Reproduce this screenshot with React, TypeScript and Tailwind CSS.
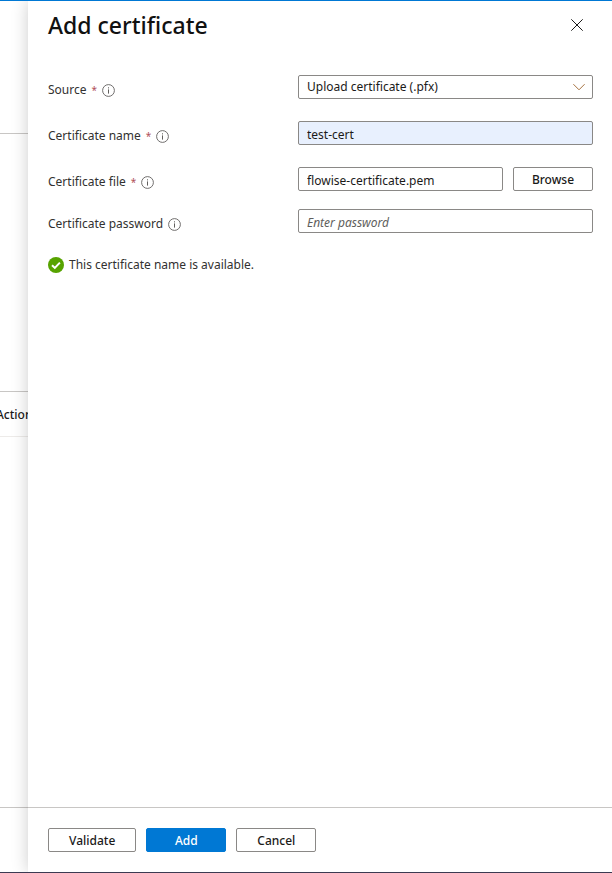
import { useState } from 'react';
import type { ReactNode } from 'react';

const BUTTON = 'h-6 shrink-0 rounded-xs border pt-0.5 text-xs leading-5 font-medium';
const FIELD = 'h-6 w-full min-w-0 rounded-xs border border-[#8a8886] px-2 text-xs leading-5 text-[#1b1a19] outline-none';

function InfoIcon() {
  return (
    <svg className="size-[13px] shrink-0" viewBox="0 0 13 13" fill="none" stroke="#605e5c" aria-hidden="true">
      <circle cx="6.5" cy="6.5" r="5.9" strokeWidth="0.9" />
      <path d="M6.5 5.4v4.2" />
      <path d="M6.5 3.3v1.1" />
    </svg>
  );
}

function CheckIcon() {
  return (
    <svg className="size-4 shrink-0" viewBox="0 0 16 16" fill="none" aria-hidden="true">
      <circle cx="8" cy="8" r="8" fill="#57a300" />
      <path d="M4 8.3l2.8 2.6 5.1-5.3" stroke="#fff" strokeWidth="2" />
    </svg>
  );
}

type RowProps = {
  id: string;
  label: string;
  required?: boolean;
  children: ReactNode;
};

function Row({ id, label, required, children }: RowProps) {
  return (
    <div className="flex">
      <label htmlFor={id} className="flex w-[250px] shrink-0 items-center gap-[5px] pt-1.5 text-xs leading-4 text-[#323130]">
        {label}
        {required && <span className="text-[10px] text-[#b0505a]">*</span>}
        <InfoIcon />
      </label>
      <div className="flex min-w-0 flex-1 gap-[10px]">{children}</div>
    </div>
  );
}

export default function App() {
  const [name, setName] = useState('test-cert');
  const [password, setPassword] = useState('');

  return (
    <div className="flex min-h-screen border-t border-t-[#0078d4] border-b border-b-[#3b3a52] bg-white font-['Noto_Sans','Segoe_UI',sans-serif] text-[#1b1a19]">
      {/* Page behind the panel */}
      <div className="flex w-7 shrink-0 flex-col overflow-hidden">
        <div className="h-[133px] border-b border-[#c8c6c4]" />
        <div className="h-[258px] border-b border-[#c8c6c4]" />
        <div className="flex h-[45px] items-center border-b border-[#edebe9] pt-0.5">
          <span className="-ml-1 text-xs leading-5 font-medium">Action</span>
        </div>
        <div className="flex-1" />
        <div className="h-[65px] border-t border-[#c8c6c4]" />
      </div>

      <section className="relative flex min-w-0 flex-1 flex-col bg-white shadow-[0_0_16px_rgba(0,0,0,0.2)] [clip-path:inset(0_0_0_-28px)]">
        <header className="flex items-center justify-between pt-2 pr-[27px] pl-5">
          <h1 className="text-[23px] leading-8 font-medium text-[#111]">Add certificate</h1>
          <button type="button" aria-label="Close" className="flex size-4 items-center justify-center">
            <svg className="size-3" viewBox="0 0 12 12" fill="none" stroke="#1b1a19" aria-hidden="true">
              <path d="M0.3 0.3l11.4 11.4M11.7 0.3L0.3 11.7" />
            </svg>
          </button>
        </header>

        <form id="certificate" className="flex-1 pt-[34px] pr-[19px] pl-5" onSubmit={(e) => e.preventDefault()}>
          <div className="flex flex-col gap-[22px]">
            <Row id="source" label="Source" required>
              <div className="relative w-full">
                <select id="source" className={`${FIELD} block appearance-none bg-white`}>
                  <option>Upload certificate (.pfx)</option>
                </select>
                <svg
                  className="pointer-events-none absolute top-2 right-2 h-2 w-3"
                  viewBox="0 0 12 8"
                  fill="none"
                  stroke="#a5713f"
                  aria-hidden="true"
                >
                  <path d="M0.4 1.2L6 6.8l5.6-5.6" />
                </svg>
              </div>
            </Row>
            <Row id="name" label="Certificate name" required>
              <input
                id="name"
                value={name}
                onChange={(e) => setName(e.target.value)}
                className={`${FIELD} bg-[#e8f0fe] pt-0.5`}
              />
            </Row>
            <Row id="file" label="Certificate file" required>
              <input id="file" readOnly value="flowise-certificate.pem" className={`${FIELD} pt-0.5`} />
              <button type="button" className={`${BUTTON} w-20 border-[#8a8886]`}>
                Browse
              </button>
            </Row>
          </div>
          <div className="mt-[18px]">
            <Row id="password" label="Certificate password">
              <input
                id="password"
                type="password"
                placeholder="Enter password"
                value={password}
                onChange={(e) => setPassword(e.target.value)}
                className={`${FIELD} pt-0.5 placeholder:text-[#605e5c] placeholder:italic`}
              />
            </Row>
          </div>
          <p className="mt-[22px] flex items-center gap-[5px] text-xs leading-5 text-[#323130]">
            <CheckIcon />
            This certificate name is available.
          </p>
        </form>

        <footer className="flex h-[65px] items-center gap-[10px] border-t border-[#c8c6c4] px-5">
          <button type="button" className={`${BUTTON} border-[#8a8886] px-5`}>
            Validate
          </button>
          <button type="submit" form="certificate" className={`${BUTTON} w-20 border-[#0078d4] bg-[#0078d4] text-white`}>
            Add
          </button>
          <button type="button" className={`${BUTTON} border-[#8a8886] px-5`}>
            Cancel
          </button>
        </footer>
      </section>
    </div>
  );
}
